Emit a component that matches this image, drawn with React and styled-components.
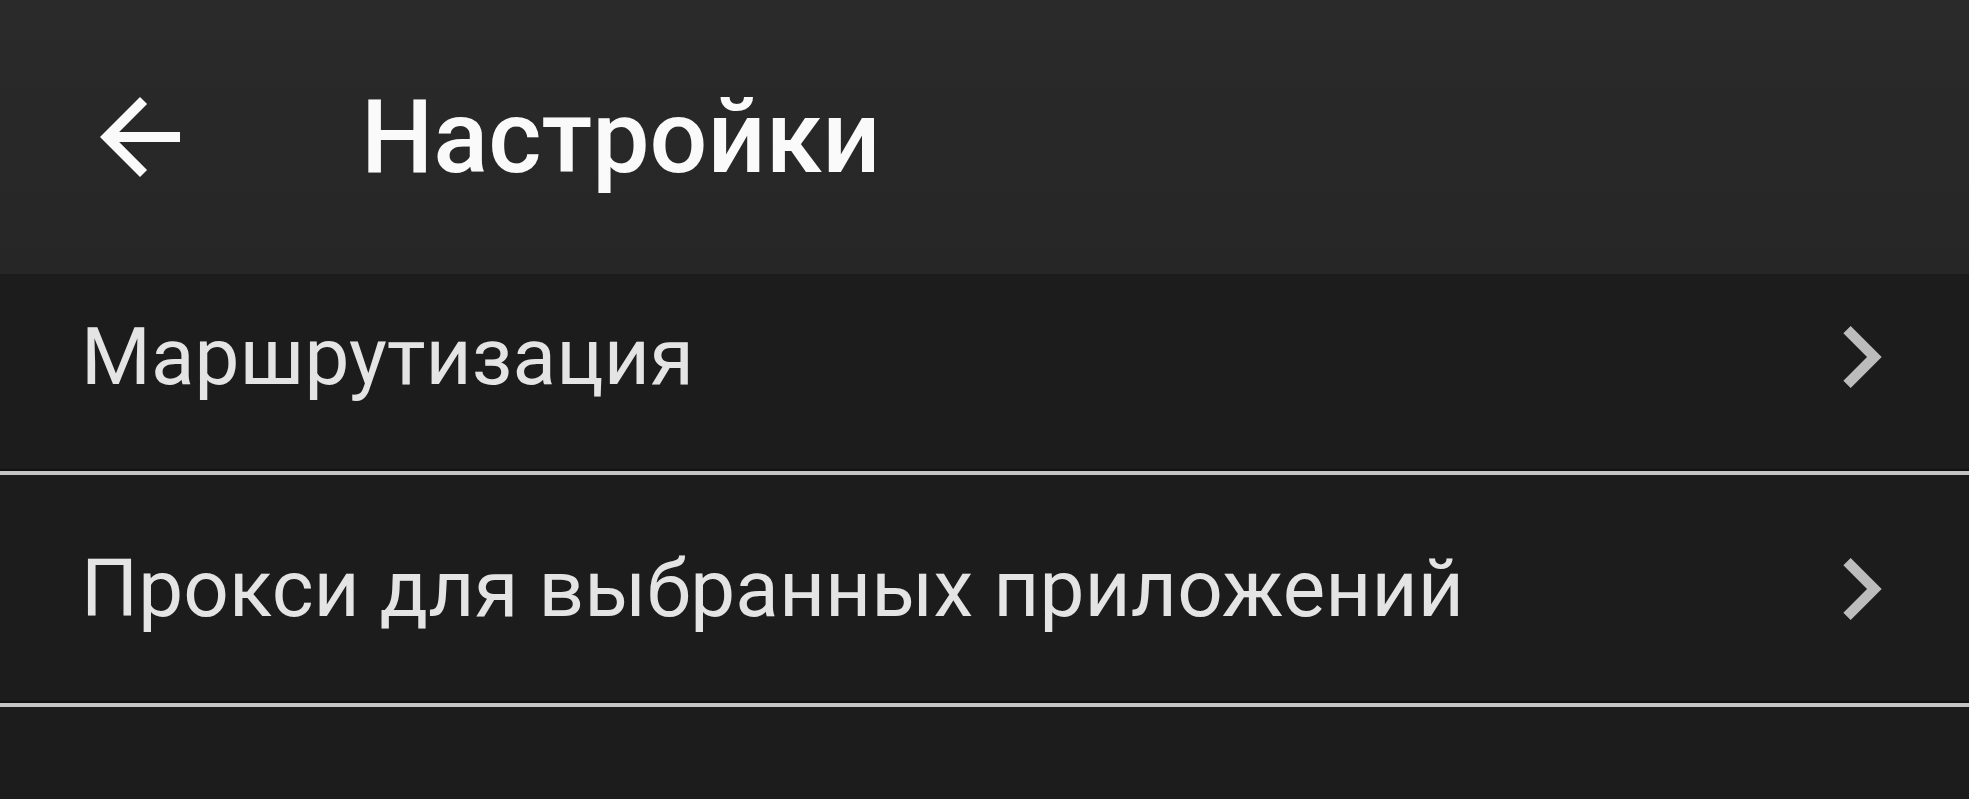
import React from 'react';
import styled, { createGlobalStyle } from 'styled-components';

const GlobalStyle = createGlobalStyle`
  html, body {
    margin: 0;
    padding: 0;
    background: #1c1c1c;
  }
  body {
    font-family: Roboto, "Noto Sans", "Liberation Sans", sans-serif;
    -webkit-font-smoothing: antialiased;
  }
`;

const Screen = styled.div`
  width: 1969px;
  height: 799px;
  display: flex;
  flex-direction: column;
  background: #1c1c1c;
  overflow: hidden;
`;

const Toolbar = styled.header`
  position: relative;
  z-index: 1;
  flex: 0 0 274px;
  display: flex;
  align-items: center;
  padding-left: 80px;
  gap: 161px;
  background: linear-gradient(#2a2a2a, #262626);
`;

const BackButton = styled.button`
  width: 120px;
  height: 120px;
  padding: 0;
  border: none;
  background: none;
  color: #fafafa;
  display: flex;
  cursor: pointer;

  svg {
    width: 100%;
    height: 100%;
  }
`;

const Title = styled.h1`
  margin: 0;
  font-size: 102px;
  font-weight: 500;
  color: #fafafa;
`;

const Body = styled.main`
  flex: 1;
  overflow: hidden;
`;

// list is scrolled a little under the toolbar
const List = styled.ul`
  list-style: none;
  margin: -31px 0 0;
  padding: 0;
`;

const Row = styled.li`
  height: 228px;
  display: flex;
  align-items: center;
  justify-content: space-between;
  padding: 0 46px 0 81px;
  border-bottom: 4px solid #c4c4c4;
  box-shadow: 0 -2px 0 #121212 inset;
  box-sizing: content-box;
`;

const Label = styled.span`
  font-size: 80px;
  letter-spacing: 0.1px;
  color: #e4e4e4;
`;

const Chevron = styled.span`
  width: 124px;
  height: 124px;
  color: #bcbcbc;
  display: flex;

  svg {
    width: 100%;
    height: 100%;
  }
`;

const items = ['Маршрутизация', 'Прокси для выбранных приложений'];

const App = () => (
  <>
    <GlobalStyle />
    <Screen>
      <Toolbar>
        <BackButton aria-label="Назад">
          <svg viewBox="0 0 24 24" fill="currentColor">
            <path d="M20 11H7.83l5.59-5.59L12 4l-8 8 8 8 1.41-1.41L7.83 13H20v-2z" />
          </svg>
        </BackButton>
        <Title>Настройки</Title>
      </Toolbar>
      <Body>
        <List>
          {items.map(item => (
            <Row key={item}>
              <Label>{item}</Label>
              <Chevron>
                <svg viewBox="0 0 24 24" fill="currentColor">
                  <path d="M10 6L8.59 7.41 13.17 12l-4.58 4.59L10 18l6-6z" />
                </svg>
              </Chevron>
            </Row>
          ))}
        </List>
      </Body>
    </Screen>
  </>
);

export default App;
